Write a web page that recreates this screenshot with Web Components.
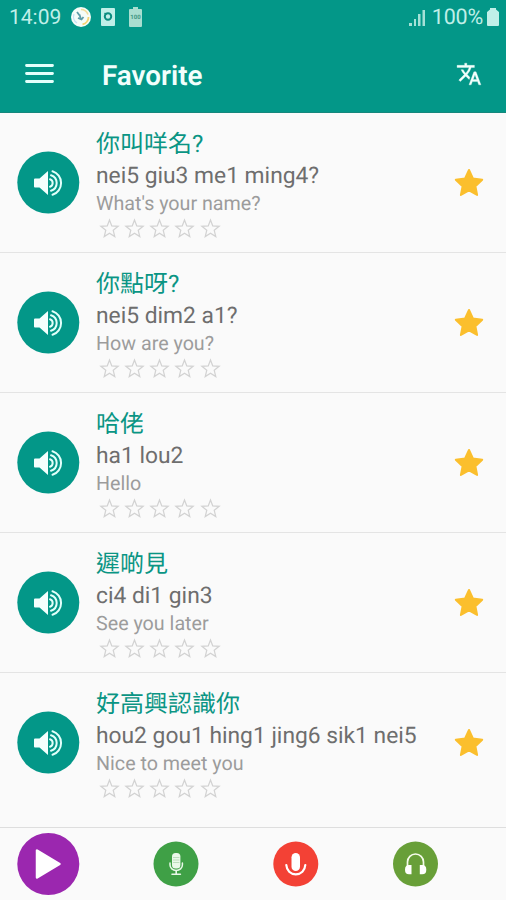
<!DOCTYPE html>
<html lang="en">
<head>
<meta charset="utf-8">
<title>Favorite</title>
<style>
    body {
        margin: 0;
        background: #fafafa;
        font-family: Roboto, "Noto Sans CJK TC", sans-serif;
        text-rendering: geometricPrecision;
    }
</style>
</head>
<body>
<phrase-app></phrase-app>

<script>
class StatusBar extends HTMLElement {
    constructor() {
        super();
        this.attachShadow({ mode: 'open' });
        this.shadowRoot.innerHTML = `
            <style>
                :host {
                    display: flex;
                    align-items: center;
                    box-sizing: border-box;
                    height: 34px;
                    padding: 0 7px 0 9px;
                    color: #c0efe8;
                    font-size: 21px;
                    line-height: 34px;
                }
                svg { display: block; flex: none; }
                span { padding-top: 2px; }
                .time { width: 52px; }
                .badge { margin-left: 9px; }
                .camera { margin-left: 9px; }
                .cell { margin-left: 14px; }
                .signal { margin: 0 7px 0 auto; }
                .full { margin-left: 4px; }
                .level { font-size: 21.5px; letter-spacing: -0.2px; }
            </style>
            <span class="time">14:09</span>
            <svg class="badge" width="22" height="22" viewBox="0 0 22 22">
                <circle cx="11" cy="11" r="10" fill="#f5fcf8"/>
                <path d="M11 3.5a7.5 7.5 0 0 1 7 5" fill="none" stroke="#f3dc9a" stroke-width="1.6"/>
                <path d="M18.5 11a7.5 7.5 0 0 1-6 7.4" fill="none" stroke="#f5d270" stroke-width="1.8"/>
                <path d="M4 8a7.5 7.5 0 0 0 3 9" fill="none" stroke="#c7e0f4" stroke-width="1.4"/>
                <path d="M7 6l3 4M9.5 8.5l1.5 5M8 12l3.5 1.5 2-2.5" fill="none" stroke="#5d9ca8" stroke-width="1.8"/>
            </svg>
            <svg class="camera" width="14" height="18" viewBox="0 0 14 18">
                <rect width="14" height="18" rx="1" fill="#c0efe8"/>
                <circle cx="7" cy="8.5" r="3.2" fill="none" stroke="#0b8d80" stroke-width="2"/>
                <path d="M3.5 5l2 1.5" stroke="#0b8d80" stroke-width="1.5"/>
            </svg>
            <svg class="cell" width="13" height="20" viewBox="0 0 13 20">
                <path d="M4 0h5v2h3a1 1 0 0 1 1 1v16a1 1 0 0 1-1 1H1a1 1 0 0 1-1-1V3a1 1 0 0 1 1-1h3z" fill="#a9ded0"/>
                <text x="6.5" y="12" text-anchor="middle" font-size="6" font-weight="700" fill="#3f9583">100</text>
            </svg>
            <svg class="signal" width="16" height="17" viewBox="0 0 16 17">
                <path d="M0 14h3v3H0zM5 10h2v7H5zM9 5h2.5v12H9zM13.5 1H16v16h-2.5z" fill="#a5e1d7"/>
            </svg>
            <span class="level">100%</span>
            <svg class="full" width="12" height="18" viewBox="0 0 12 18">
                <path d="M3 0h6v1.5L12 4v13a1 1 0 0 1-1 1H1a1 1 0 0 1-1-1V4l3-2.5z" fill="#c0efe8"/>
            </svg>
        `;
    }
}

class AppToolbar extends HTMLElement {
    constructor() {
        super();
        this.attachShadow({ mode: 'open' });
        this.shadowRoot.innerHTML = `
            <style>
                :host {
                    display: flex;
                    align-items: center;
                    box-sizing: border-box;
                    height: 79px;
                    padding: 2px 24px 0 25px;
                    color: #f2fffc;
                    border-bottom: 1px solid #15877c;
                }
                h1 {
                    flex: 1;
                    margin: 3px 0 0 48px;
                    font-size: 27.8px;
                    font-weight: 600;
                    line-height: 36px;
                }
                svg { display: block; }
            </style>
            <svg width="29" height="20" viewBox="0 0 29 20">
                <path d="M1.5 1.5h26M1.5 9.5h26M1.5 17.5h26" stroke="#e4fffb" stroke-width="2.8" stroke-linecap="round"/>
            </svg>
            <h1><slot></slot></h1>
            <svg width="26" height="26" viewBox="0 0 24 24">
                <path fill="#f2fffc" stroke="#f2fffc" stroke-width=".3" d="M12.87 15.07l-2.54-2.51.03-.03A17.52 17.52 0 0 0 14.07 6H17V4h-7V2H8v2H1v1.99h11.17C11.5 7.92 10.44 9.75 9 11.35 8.07 10.32 7.3 9.19 6.69 8h-2c.73 1.63 1.73 3.17 2.98 4.56l-5.09 5.02L4 19l5-5 3.11 3.11.76-2.04zM18.5 10h-2L12 22h2l1.12-3h4.75L21 22h2l-4.5-12zm-2.62 7l1.62-4.33L19.12 17h-3.24z"/>
            </svg>
        `;
    }
}

class SoundButton extends HTMLElement {
    constructor() {
        super();
        this.attachShadow({ mode: 'open' });
        this.shadowRoot.innerHTML = `
            <style>
                :host { display: block; width: 63px; height: 63px; }
                svg { display: block; }
            </style>
            <svg width="63" height="63" viewBox="0 0 63 63">
                <circle cx="31.3" cy="31.5" r="31" fill="#039788"/>
                <path d="M18 27.500h4.500l8.500-7.500v24l-8.500-7.500H18q-1 0-1-1v-7q0-1 1-1z" fill="#f4fffd"/>
                <g fill="none" stroke="#e2fffa" stroke-width="2" stroke-linecap="round">
                    <path d="M33 28.300a3.900 3.900 0 0 1 0 7.400"/>
                    <path d="M34 24.200a8.200 8.200 0 0 1 0 15.600"/>
                    <path d="M35.500 20.200a12.400 12.400 0 0 1 0 23.600"/>
                </g>
            </svg>
        `;
    }
}

class StarRating extends HTMLElement {
    constructor() {
        super();
        this.attachShadow({ mode: 'open' });
        const star = `
            <svg width="23" height="23" viewBox="0 0 24 24">
                <path d="M12 3.2l2.35 6.05 6.65.48-5.1 4.2 1.6 6.57L12 17l-5.5 3.5 1.6-6.57L3 9.73l6.65-.48z" fill="none" stroke="#d2d2d2" stroke-width="1.3"/>
            </svg>`;
        this.shadowRoot.innerHTML = `
            <style>
                :host { display: flex; align-items: center; gap: 2.3px; height: 26px; margin-left: 1.6px; }
                svg { display: block; }
            </style>
            ${star.repeat(5)}
        `;
    }
}

class PhraseRow extends HTMLElement {
    constructor() {
        super();
        this.attachShadow({ mode: 'open' });
        this.shadowRoot.innerHTML = `
            <style>
                :host {
                    display: flex;
                    box-sizing: border-box;
                    height: 140px;
                    padding: 14px 21px 0 17px;
                    border-bottom: 1px solid #e4e4e4;
                }
                :host(:last-of-type) { border-bottom: 0; }
                sound-button { flex: none; margin-top: 24px; }
                .text { flex: 1; margin-left: 16px; white-space: nowrap; }
                .han, .reading, .meaning { display: block; }
                .han { color: #0a9584; font-size: 24px; line-height: 34px; }
                .reading { color: #6e6e6e; font-size: 22.8px; line-height: 30px; }
                .meaning { color: #9c9c9c; font-size: 19.7px; line-height: 25px; }
                star-rating { margin-top: -1px; }
                .favorite { display: block; flex: none; margin-top: 40px; }
            </style>
            <sound-button></sound-button>
            <div class="text">
                <slot class="han" name="han"></slot>
                <slot class="reading" name="reading"></slot>
                <slot class="meaning"></slot>
                <star-rating></star-rating>
            </div>
            <svg class="favorite" width="32" height="32" viewBox="0 0 32 32">
                <path d="M16 3l3.9 8.500 9.300 1.200-6.800 6.500 1.700 8.800-8.100-4.500L7.900 28l1.700-8.800-6.800-6.500 9.300-1.200z" fill="#fbbf2d" stroke="#fbbf2d" stroke-width="2" stroke-linejoin="round"/>
            </svg>
        `;
    }
}

class BottomBar extends HTMLElement {
    constructor() {
        super();
        this.attachShadow({ mode: 'open' });
        this.shadowRoot.innerHTML = `
            <style>
                :host {
                    display: flex;
                    align-items: center;
                    box-sizing: border-box;
                    height: 73px;
                    padding-left: 17px;
                    border-top: 1px solid #dedede;
                }
                svg { display: block; flex: none; }
                .studio { margin-left: 73px; }
                .record, .listen { margin-left: 74px; }
            </style>
            <svg width="63" height="62" viewBox="0 0 63 62">
                <circle cx="31.3" cy="31" r="31" fill="#9b27af"/>
                <path d="M20 17.5v27L42.5 31z" fill="#fff" stroke="#fff" stroke-width="2.5" stroke-linejoin="round"/>
            </svg>
            <svg class="studio" width="46" height="46" viewBox="0 0 46 46">
                <circle cx="23" cy="23" r="22.5" fill="#3fa046"/>
                <rect x="19" y="12" width="8.4" height="15.5" rx="3.5" fill="#e9f8e9"/>
                <path d="M20 16.5h6.4M20 19h6.4M20 21.5h6.4" stroke="#b5dab7" stroke-width=".9"/>
                <path d="M17 22v2a6.2 5.5 0 0 0 12.4 0v-2" fill="none" stroke="#e9f8e9" stroke-width="1.5" stroke-linecap="round"/>
                <path d="M23.2 29.5v3M19 33.3h8.4" stroke="#e9f8e9" stroke-width="1.6" stroke-linecap="round"/>
            </svg>
            <svg class="record" width="46" height="46" viewBox="0 0 46 46">
                <circle cx="22.8" cy="23" r="22.5" fill="#f34135"/>
                <rect x="18.5" y="12" width="8.5" height="18" rx="4.25" fill="#fff"/>
                <path d="M13.3 24c.4 5.5 4.2 9.3 9.5 9.3s9.1-3.8 9.5-9.3" fill="none" stroke="#fff" stroke-width="2.2" stroke-linecap="round"/>
            </svg>
            <svg class="listen" width="46" height="46" viewBox="0 0 46 46">
                <circle cx="22.5" cy="23" r="22.5" fill="#689f38"/>
                <path d="M14.5 25v-4a8 8 0 0 1 16 0v4" fill="none" stroke="#f4fbe9" stroke-width="1.7"/>
                <path d="M18.5 24v9.3H16q-4 0-4-4.65T16 24zM26.8 24v9.3h2.5q4 0 4-4.65t-4-4.65z" fill="#fff"/>
            </svg>
        `;
    }
}

class PhraseApp extends HTMLElement {
    constructor() {
        super();
        this.attachShadow({ mode: 'open' });
        this.phrases = [
            ['你叫咩名?', 'nei5 giu3 me1 ming4?', "What's your name?"],
            ['你點呀?', 'nei5 dim2 a1?', 'How are you?'],
            ['哈佬', 'ha1 lou2', 'Hello'],
            ['遲啲見', 'ci4 di1 gin3', 'See you later'],
            ['好高興認識你', 'hou2 gou1 hing1 jing6 sik1 nei5', 'Nice to meet you']
        ];
        this.shadowRoot.innerHTML = `
            <style>
                :host { display: flex; flex-direction: column; width: 506px; height: 900px; overflow: hidden; }
                header { flex: none; background: #039788; }
                main { flex: 1; }
            </style>
            <header>
                <status-bar></status-bar>
                <app-toolbar>Favorite</app-toolbar>
            </header>
            <main>${this._rows()}</main>
            <bottom-bar></bottom-bar>
        `;
    }

    _rows() {
        return this.phrases.map(([han, reading, meaning]) => `
            <phrase-row>
                <span slot="han" lang="zh-Hant">${han}</span>
                <span slot="reading">${reading}</span>
                <span>${meaning}</span>
            </phrase-row>
        `).join('');
    }
}

customElements.define('status-bar', StatusBar);
customElements.define('app-toolbar', AppToolbar);
customElements.define('sound-button', SoundButton);
customElements.define('star-rating', StarRating);
customElements.define('phrase-row', PhraseRow);
customElements.define('bottom-bar', BottomBar);
customElements.define('phrase-app', PhraseApp);
</script>
</body>
</html>
